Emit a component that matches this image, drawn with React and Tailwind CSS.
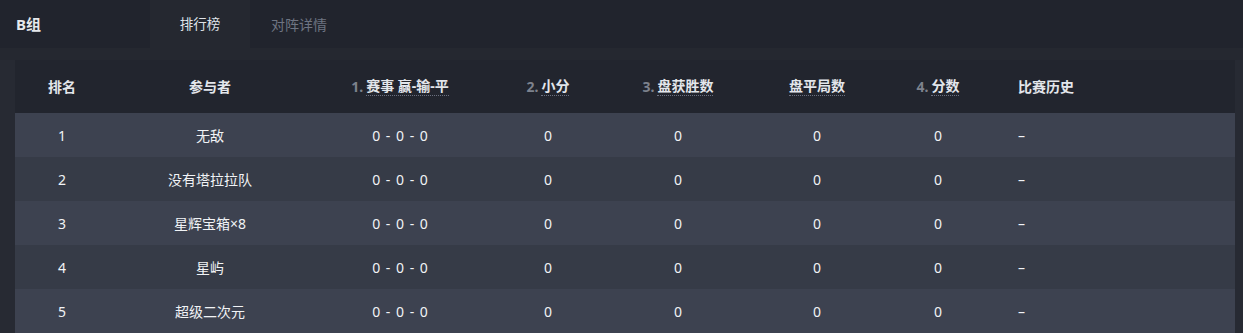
import React from "react";

const rows = [
  { rank: 1, name: "无敌" },
  { rank: 2, name: "没有塔拉拉队" },
  { rank: 3, name: "星辉宝箱×8" },
  { rank: 4, name: "星屿" },
  { rank: 5, name: "超级二次元" },
];

const grid =
  "grid grid-cols-[94px_202px_178px_118px_142px_136px_106px_1fr] items-center";

function H({ n, label, u = true }) {
  return (
    <div className="flex items-center justify-center">
      {n && <span className="text-[#7d828d] mr-[3px]">{n}</span>}
      <span
        className={
          u
            ? "border-b border-dotted border-[#6b7080] leading-[18px]"
            : "leading-[18px]"
        }
      >
        {label}
      </span>
    </div>
  );
}

export default function App() {
  return (
    <div
      className="w-[1243px] h-[333px] overflow-hidden bg-[#272a33] text-[14px]"
      style={{ fontFamily: '"Noto Sans", "Noto Sans CJK SC", sans-serif' }}
    >
      <div className="h-[48px] bg-[#21242d] flex items-center">
        <div className="w-[150px] pl-[16px] text-[15px] font-bold text-[#e6e8ec]">
          B组
        </div>
        <div className="w-[100px] h-full bg-[#252830] flex items-center justify-center text-[13.5px] text-[#dfe2e8]">
          排行榜
        </div>
        <div className="w-[98px] h-full flex items-center justify-center text-[14px] text-[#6e7482]">
          对阵详情
        </div>
      </div>
      <div className="h-[12px] bg-[#252830]" />
      <div className="ml-[15px] mr-[8px] bg-[#22252e]">
        <div className={`${grid} h-[53px] font-bold text-[#e3e6eb]`}>
          <H label="排名" u={false} />
          <H label="参与者" u={false} />
          <H n="1." label="赛事 赢-输-平" />
          <H n="2." label="小分" />
          <H n="3." label="盘获胜数" />
          <H label="盘平局数" />
          <H n="4." label="分数" />
          <div className="pl-[27px] leading-[18px]">比赛历史</div>
        </div>
        {rows.map((r, i) => (
          <div
            key={r.rank}
            className={`${grid} h-[44px] text-[#f1f3f6] ${
              i % 2 === 0 ? "bg-[#3d4250]" : "bg-[#363b47]"
            }`}
          >
            <div className="text-center">{r.rank}</div>
            <div className="text-center">{r.name}</div>
            <div className="text-center [word-spacing:2px]">0 - 0 - 0</div>
            <div className="text-center">0</div>
            <div className="text-center">0</div>
            <div className="text-center">0</div>
            <div className="text-center">0</div>
            <div className="pl-[27px]">–</div>
          </div>
        ))}
      </div>
    </div>
  );
}
